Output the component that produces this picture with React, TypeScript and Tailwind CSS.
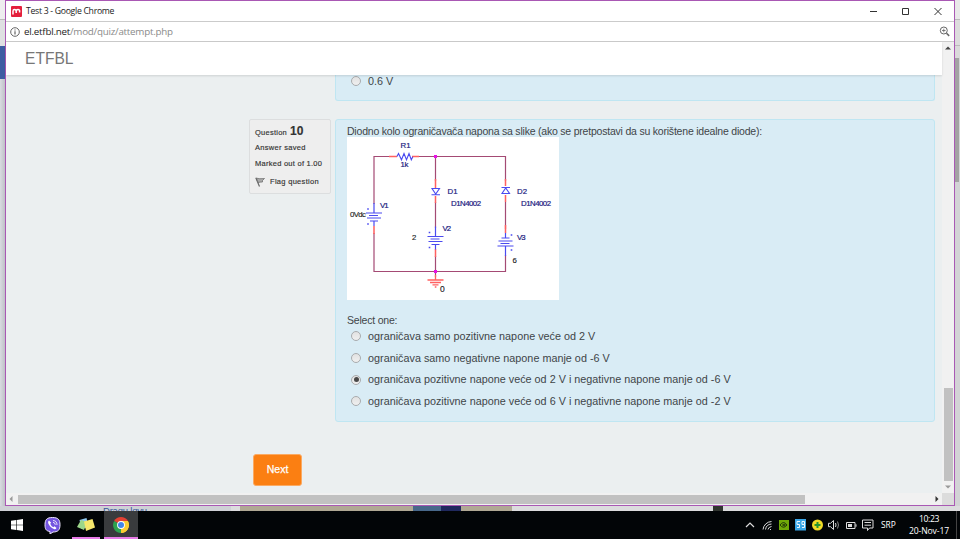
import React from "react";

const OPTIONS = [
  { text: "ograničava samo pozitivne napone veće od 2 V", checked: false },
  { text: "ograničava samo negativne napone manje od -6 V", checked: false },
  { text: "ograničava pozitivne napone veće od 2 V i negativne napone manje od -6 V", checked: true },
  { text: "ograničava pozitivne napone veće od 6 V i negativne napone manje od -2 V", checked: false },
];

function Radio({ checked }: { checked: boolean }) {
  return (
    <span className="flex size-[10px] shrink-0 items-center justify-center rounded-full border border-[#a9abad] bg-gradient-to-b from-[#e2e2e2] to-[#efefef]">
      {checked && <span className="size-[5px] rounded-full bg-[#484848]" />}
    </span>
  );
}

function Option({ text, checked }: { text: string; checked: boolean }) {
  return (
    <div className="flex h-[21.6px] items-center pl-[4px]">
      <Radio checked={checked} />
      <span className="ml-[7px] whitespace-nowrap text-[10.8px] tracking-[0.01px] text-[#3f4548]">{text}</span>
    </div>
  );
}

/* Voltage source: alternating long and short plates with polarity dots */
function Source({ x, y, flip }: { x: number; y: number; flip?: boolean }) {
  const s = flip ? -1 : 1;
  return (
    <g stroke="#4a4af0" strokeWidth="1.2">
      <path d={`M${x} ${y - 14 * s}V${y - 4 * s}M${x} ${y + 4 * s}V${y + 9 * s}`} />
      <path d={`M${x - 8} ${y - 4 * s}h16M${x - 5} ${y - 1.5 * s}h9M${x - 7} ${y + 1 * s}h14M${x - 4} ${y + 4 * s}h8`} />
      <path d={`M${x - 6 * s - 0.8} ${y - 8 * s}h1.6M${x - 6 * s - 0.8} ${y + 7 * s}h1.6`} strokeWidth="1.5" />
    </g>
  );
}

function Circuit() {
  return (
    <svg
      viewBox="347 137 212 163"
      className="block h-[163px] w-[212px] bg-white"
      fill="none"
      fontFamily="Liberation Sans, Arial, sans-serif"
      fontSize="7.8"
    >
      <g stroke="#a44a74" strokeWidth="1.2">
        <path d="M374 204V156.5H389M414 156.5H505.500V181M505.500 202V229M505.500 255V271.500H374V233M435.500 156V181M435.500 202V228M435.500 256V277" />
      </g>
      <g stroke="#ff6060" strokeWidth="1.5">
        <path d="M389 156.500h8M412 156.500h7M435.500 179v9M435.500 196v7M505.500 179v7M505.500 195v7M374 226v8M435.500 249v8M505.500 225v8" />
        <path d="M435.500 275v5M427.500 280h16M430 282.500h11M432.500 284.800h6M434.800 287h1.600" strokeWidth="1.300" />
      </g>
      <g stroke="#4a4af0" strokeWidth="1.1">
        <path d="M397 156.500l1.500-3 3 6.300 2.500-6.300 2.500 6.300 2.500-6.300 2.300 6.300 1.500-3" />
        <path d="M432 188.500h7.500l-3.800 5.500zM431.500 194.700h8.500" />
        <path d="M502 193.500h7.500l-3.800-5.500zM501.500 187.500h8.500" />
      </g>
      <Source x={374} y={217} />
      <Source x={435.5} y={240.5} />
      <Source x={505.5} y={242} flip />
      <g fill="#e810e8">
        <rect x="434" y="155" width="3" height="3" />
        <rect x="434" y="270" width="3" height="3" />
      </g>
      <g fill="#202080" stroke="#202080" strokeWidth="0.2">
        <text x="400.500" y="147.800">R1</text>
        <text x="400.500" y="167" textLength="8">1k</text>
        <text x="447.500" y="193.500">D1</text>
        <text x="517" y="193.500">D2</text>
        <text x="451" y="206" textLength="30">D1N4002</text>
        <text x="521" y="206" textLength="30">D1N4002</text>
        <text x="380" y="207.500" textLength="8.500">V1</text>
        <text x="442.500" y="231" textLength="8.500">V2</text>
        <text x="517" y="240" textLength="8.500">V3</text>
      </g>
      <g fill="#222" stroke="#222" strokeWidth="0.15">
        <text x="350" y="217" textLength="16">0Vdc</text>
        <text x="412" y="240.300">2</text>
        <text x="512.500" y="263">6</text>
        <text x="440" y="291.500" fontSize="8.500">0</text>
      </g>
    </svg>
  );
}

function TitleBar() {
  return (
    <div className="flex h-[20px] shrink-0 items-center bg-white pl-[5px]">
      <svg viewBox="0 0 11 11" className="size-[11px]">
        <rect width="11" height="11" rx="1" fill="#e4203c" />
        <path d="M2 8.500V5.200Q2 3.500 3.500 3.500T5.200 5.200V7M5.200 5.200Q5.200 3.500 7 3.500T8.600 5.200V6.500" stroke="#fff" strokeWidth="1.500" fill="none" />
      </svg>
      <span className="ml-[4px] mt-[1px] whitespace-nowrap font-['Open_Sans'] text-[8.7px] tracking-[-0.3px] text-[#222]">Test 3 - Google Chrome</span>
      <svg viewBox="0 0 80 12" className="ml-auto mr-[8px] h-[12px] w-[80px]" fill="none" stroke="#333" strokeWidth="1">
        <path d="M4 6.500h7M36.500 3.500h6v6h-6zM68.500 3l7 7M75.500 3l-7 7" />
      </svg>
    </div>
  );
}

function AddressBar() {
  return (
    <div className="flex h-[21px] shrink-0 items-center border-y border-[#cbcbcb] bg-white pl-[4px] pr-[4px]">
      <svg viewBox="0 0 10 10" className="size-[10px]" fill="none" stroke="#555">
        <circle cx="5" cy="5" r="4.300" strokeWidth="0.900" />
        <path d="M5 4.300v3.200M5 2.400v1" strokeWidth="1.100" />
      </svg>
      <span className="ml-[4px] mt-[1px] whitespace-nowrap font-['Open_Sans'] text-[9.8px] tracking-[-0.24px] text-[#8a8a8a]">
        <span className="text-[#222]">el.etfbl.net</span>/mod/quiz/attempt.php
      </span>
      <svg viewBox="0 0 11 11" className="ml-auto size-[11px]" fill="none" stroke="#666">
        <circle cx="4.800" cy="4.500" r="3.500" />
        <path d="M3 4.500h3.600M4.800 2.700v3.600" strokeWidth="0.800" />
        <path d="M7.500 7.200l2.700 2.700" strokeWidth="1.500" />
      </svg>
    </div>
  );
}

function QuestionInfo() {
  return (
    <div className="flex h-[75px] w-[82px] shrink-0 flex-col rounded-[2px] border border-[#dcdedf] bg-[#eeeeee] pl-[5px] text-[7.5px] text-[#333] [-webkit-text-stroke:0.15px_#333]">
      <div className="mt-[2px] flex h-[15px] items-baseline whitespace-nowrap">
        <span className="tracking-[0.25px]">Question</span>
        <b className="ml-[3px] text-[12px]">10</b>
      </div>
      <div className="mt-[6px] h-[10px] whitespace-nowrap leading-[10px] tracking-[0.3px]">Answer saved</div>
      <div className="mt-[6px] h-[10px] whitespace-nowrap leading-[10px] tracking-[0.26px]">Marked out of 1.00</div>
      <div className="mt-[7px] flex h-[11px] items-center whitespace-nowrap tracking-[0.3px]">
        <svg viewBox="0 0 10 10" className="mr-[5px] size-[10px]">
          <path d="M.8.800L4.500 9.500" stroke="#666" strokeWidth="1.200" />
          <path d="M1.500 1.200Q4 2 9.500 1.500L7.500 3.500 7.500 5Q5 5 3 5.500z" fill="#aaa" stroke="#666" strokeWidth="0.700" />
        </svg>
        Flag question
      </div>
    </div>
  );
}

function Page() {
  return (
    <div className="flex min-w-0 flex-1 flex-col">
      <header className="z-10 flex h-[33px] shrink-0 items-center bg-white pl-[19px] text-[15.6px] text-[#777] shadow-[0_1px_2px_rgba(0,0,0,0.12)]">
        ETFBL
      </header>
      <main className="flex min-h-0 flex-1 flex-col bg-[#ebeff0]">
        <div className="ml-[329px] flex h-[26px] w-[600px] shrink-0 rounded-b-[3px] border border-t-0 border-[#bfe6f2] bg-[#d9ecf5] pl-[15px]">
          <div className="mt-[1px] flex h-[10px] items-center">
            <Radio checked={false} />
            <span className="ml-[7px] text-[10.8px] tracking-[0.02px] text-[#3f4548]">0.6 V</span>
          </div>
        </div>
        <div className="mt-[18px] flex pl-[243px]">
          <QuestionInfo />
          <section className="ml-[4px] h-[303px] w-[600px] rounded-[3px] border border-[#bfe6f2] bg-[#d9ecf5] pl-[11px] pt-[5px] text-[#3f4548]">
            <p className="h-[12px] whitespace-nowrap text-[10.5px] leading-[13px] tracking-[-0.21px]">
              Diodno kolo ograničavača napona sa slike (ako se pretpostavi da su korištene idealne diode):
            </p>
            <Circuit />
            <p className="mt-[14px] h-[11.6px] text-[10.5px] leading-[13px] tracking-[-0.2px]">Select one:</p>
            {OPTIONS.map((o) => (
              <Option key={o.text} {...o} />
            ))}
          </section>
        </div>
        <button className="ml-[247px] mt-[32px] h-[32px] w-[49px] shrink-0 rounded-[3px] border border-[#fbaa62] bg-[#fb7f12] text-[10.5px] text-white [-webkit-text-stroke:0.25px_#fff]">
          Next
        </button>
      </main>
    </div>
  );
}

function ChromeWindow() {
  return (
    <div className="flex h-[506px] w-[950px] flex-col border border-[#a958b4] font-['Liberation_Sans',Arial,sans-serif]">
      <TitleBar />
      <AddressBar />
      <div className="flex min-h-0 flex-1">
        <Page />
        <div className="flex w-[12px] shrink-0 flex-col items-center bg-[#f1f1f1]">
          <svg viewBox="0 0 6 4" className="mt-[4px] h-[4px] w-[6px]"><path d="M0 3.500L3 .500l3 3z" fill="#444" /></svg>
          <div className="mt-auto h-[93px] w-[9px] bg-[#c1c1c1]" />
          <svg viewBox="0 0 6 4" className="mb-[4px] mt-[4px] h-[4px] w-[6px]"><path d="M0 .500h6l-3 3z" fill="#999" /></svg>
        </div>
      </div>
      <div className="flex h-[12px] shrink-0 items-center bg-[#f1f1f1]">
        <svg viewBox="0 0 4 6" className="ml-[3px] h-[6px] w-[4px]"><path d="M3.500 0v6L.500 3z" fill="#999" /></svg>
        <div className="ml-[5px] h-[9px] w-[787px] bg-[#c1c1c1]" />
        <svg viewBox="0 0 4 6" className="ml-auto mr-[3px] h-[6px] w-[4px]"><path d="M.500 0v6l3-3z" fill="#333" /></svg>
        <div className="h-[12px] w-[12px] bg-[#dcdcdc]" />
      </div>
    </div>
  );
}

function Taskbar() {
  return (
    <footer className="flex h-[28px] bg-[#020507] font-['Open_Sans'] text-white">
      <div className="flex w-[34px] items-center justify-center">
        <svg viewBox="0 0 12 12" className="size-[12px]" fill="#fff">
          <path d="M0 1.800l5.200-.8v4.700H0zM5.800.900L12 0v5.700H5.800zM0 6.300h5.200V11L0 10.200zM5.800 6.300H12V12l-6.200-.9z" />
        </svg>
      </div>
      <div className="flex w-[36px] items-center justify-center">
        <svg viewBox="0 0 17 17" className="size-[17px]">
          <path d="M8.500.500C14 .5 16 2.500 16 7.800S14 15 9 15L6 17v-2.500C2 14 1 12 1 7.800 1 2.500 3 .500 8.500.500z" fill="#7455e0" stroke="#eee8ff" />
          <path d="M5 3.500Q3.500 4.500 4.300 6.500 6 10.500 10.500 12.300q1.200.3 2-1.300l-2-1.700-1.200 1Q7 9 6.200 6.700l1-1z" fill="#fff" />
          <path d="M9 3.500q4 .2 4 4.500M9 5.300q2.200.2 2.300 2.500" stroke="#fff" strokeWidth=".8" fill="none" />
        </svg>
      </div>
      <div className="ml-[2px] flex w-[28px] flex-col items-center border-b-2 border-[#e87be8]">
        <svg viewBox="0 0 18 14" className="mt-[7px] h-[14px] w-[18px]">
          <path d="M2.500 2l7-2 2 9-7 2z" fill="#8fc8ee" />
          <path d="M0 9l4-7 6 2-3 8z" fill="#9bd68a" />
          <path d="M7 3.500L15.500 1 18 9.500 9 13z" fill="#f6e76c" />
        </svg>
      </div>
      <div className="ml-[4px] flex w-[34px] flex-col items-center border-b-2 border-[#e87be8] bg-[#393b3d]">
        <svg viewBox="0 0 16 16" className="mt-[6px] size-[16px]">
          <path d="M8 8L1.100 4A8 8 0 0 1 14.900 4z" fill="#e34133" />
          <path d="M8 8l6.900-4A8 8 0 0 1 8 16z" fill="#fbcd32" />
          <path d="M8 8L8 16A8 8 0 0 1 1.100 4z" fill="#2da14e" />
          <path d="M8 4h6.900a8 8 0 0 1-6.900 12l3.500-6z" fill="#fbcd32" />
          <circle cx="8" cy="8" r="3.900" fill="#fff" />
          <circle cx="8" cy="8" r="3" fill="#4285e8" />
        </svg>
      </div>
      <svg viewBox="744 511 132 28" className="ml-auto h-[28px] w-[132px]" fill="none" stroke="#ddd">
        <path d="M746 527l4-4 4 4" strokeWidth="1.200" />
        <path d="M763 529.500a9 9 0 0 1 8.500-8M765.500 529.500a6.500 6.500 0 0 1 6-5.500M768 529.500a4 4 0 0 1 3.500-3M770.500 530v-1" strokeWidth="1" />
        <rect x="779" y="520" width="10" height="10" fill="#70a908" stroke="none" />
        <path d="M780 525q3.500-5 7 0-3.500 4.500-7 0zM782.500 525q1.500-2 3 0-1.500 2-3 0" stroke="#253d08" />
        <rect x="795" y="519" width="11" height="11.500" fill="#3aa6e8" stroke="none" />
        <path d="M800 521.500h-3v3h2.500v3H797M802 521.500h2.500v3H802zM802 527.500h2.500v-3" stroke="#eef8ff" />
        <circle cx="817.500" cy="525" r="5.500" fill="#f2dc28" stroke="none" />
        <path d="M814.500 525h6M817.500 522v6" stroke="#279531" strokeWidth="2" />
        <path d="M828.500 523.300h2l3-2.800v9l-3-2.800h-2zM835.500 523q1 2 0 4" />
        <path d="M837.500 521.500q2 3.500 0 7" stroke="#888" />
        <path d="M846.500 522.500h8.500v6h-8.500zM856 524.300v2.400" />
        <path d="M848 524h4v3h-4z" fill="#ddd" stroke="none" />
        <path d="M862.500 520h10.500v8h-3.500l-2 2.500v-2.500h-5zM864.500 522.500h6.500M864.500 525.200h6.500" />
      </svg>
      <span className="ml-[5px] mt-[8px] w-[15px] whitespace-nowrap text-[8.4px] leading-[12px]">SRP</span>
      <div className="ml-[9px] mt-[2px] flex w-[48px] flex-col items-center whitespace-nowrap text-[8.6px] leading-[12px]">
        <span className="tracking-[-0.4px]">10:23</span>
        <span className="tracking-[-0.1px]">20-Nov-17</span>
      </div>
      <div className="ml-[3px] w-[4px] border-l border-[#444]" />
    </footer>
  );
}

export default function App() {
  return (
    <div className="flex h-[539px] w-[960px] flex-col overflow-hidden bg-[#d8dade]">
      <div className="flex h-[506px] shrink-0">
        <div className="flex w-[5px] flex-col bg-gradient-to-r from-[#d9dce1] to-[#bfc1c8]">
          <div className="h-[20px] border-b border-[#bbb] bg-[#eeeeef]" />
          <div className="h-[26px] bg-[#dfe0e2]" />
          <div className="h-[33px] bg-[#3d5da2]" />
        </div>
        <ChromeWindow />
        <div className="flex w-[5px] flex-col bg-[#d2d3d5]">
          <div className="h-[20px] border-b border-[#bbb] bg-[#e8e8e8]" />
          <div className="h-[26px] border-b border-[#bbb] bg-[#dcdcdc]" />
          <div className="h-[12px] bg-[#dadada]" />
          <div className="h-[124px] w-[4px] bg-[#a3a3a3]" />
        </div>
      </div>
      <div className="flex h-[5px] shrink-0 overflow-hidden bg-[#dcdcde]">
        <div className="h-[5px] w-[231px] bg-[#cfd1d6] pl-[103px] font-['Liberation_Sans'] text-[9.5px] leading-[10px] tracking-[-0.2px] text-[#365899]">Dragu lqvu</div>
        <div className="ml-[9px] flex w-[272px] bg-[#b0a894]">
          <div className="ml-[173px] w-[28px] bg-[#48688a]" />
          <div className="w-[20px] bg-[#20295e]" />
        </div>
        <div className="ml-[201px] w-[10px] bg-[#30352f]" />
      </div>
      <Taskbar />
    </div>
  );
}
